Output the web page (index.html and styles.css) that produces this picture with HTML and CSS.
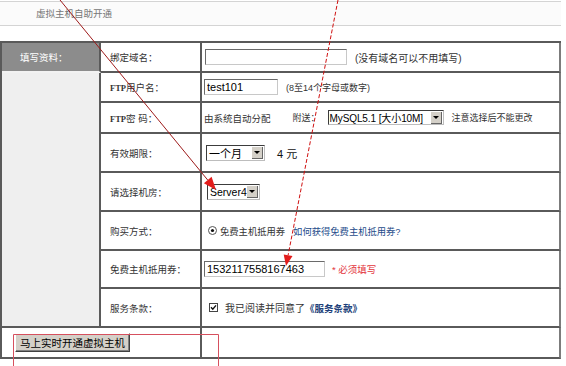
FILE: index.html
```html
<!DOCTYPE html>
<html>

<head>
  <meta charset="utf-8" />
  <meta name="viewport" content="width=device-width, initial-scale=1" />
  <title>虚拟主机自助开通</title>
  <link rel="stylesheet" href="styles.css">
</head>

<body>
  <div class="page">
    <div class="crumb">虚拟主机自助开通</div>

    <table class="form">
      <tr class="r1">
        <td class="side-head">填写资料：</td>
        <td class="label">绑定域名：</td>
        <td class="value">
          <div class="field">
            <input class="txt w-domain" type="text" value="" />
            <span class="hint">(没有域名可以不用填写)</span>
          </div>
        </td>
      </tr>
      <tr class="r2">
        <td class="side" rowspan="7"></td>
        <td class="label"><span class="ftp">FTP</span>用户名：</td>
        <td class="value">
          <div class="field">
            <input class="txt w-user" type="text" value="test101" />
            <span class="hint small">(8至14个字母或数字)</span>
          </div>
        </td>
      </tr>
      <tr class="r3">
        <td class="label"><span class="ftp">FTP</span>密 码：</td>
        <td class="value">
          <div class="field">
            <span class="auto">由系统自动分配</span>
            <span class="gift">附送：</span>
            <span class="sel w-mysql"><span class="sel-val">MySQL5.1 [大小10M]</span><span class="sel-btn"></span></span>
            <span class="hint small">注意选择后不能更改</span>
          </div>
        </td>
      </tr>
      <tr class="r4">
        <td class="label">有效期限：</td>
        <td class="value">
          <div class="field">
            <span class="sel w-month"><span class="sel-val">一个月</span><span class="sel-btn"></span></span>
            <span class="price">4 元</span>
          </div>
        </td>
      </tr>
      <tr class="r5">
        <td class="label">请选择机房：</td>
        <td class="value">
          <div class="field">
            <span class="sel w-room"><span class="sel-val">Server4</span><span class="sel-btn"></span></span>
          </div>
        </td>
      </tr>
      <tr class="r6">
        <td class="label">购买方式：</td>
        <td class="value">
          <div class="field">
            <svg class="radio" width="9" height="9" viewBox="0 0 9 9">
              <circle cx="4.5" cy="4.5" r="4" fill="#fff" stroke="#555" />
              <circle cx="4.5" cy="4.5" r="1.6" fill="#111" />
            </svg>
            <span class="pay">免费主机抵用券</span>
            <a class="link" href="#">如何获得免费主机抵用券?</a>
          </div>
        </td>
      </tr>
      <tr class="r7">
        <td class="label">免费主机抵用券：</td>
        <td class="value">
          <div class="field">
            <input class="txt w-coupon" type="text" value="1532117558167463" />
            <span class="required">* 必须填写</span>
          </div>
        </td>
      </tr>
      <tr class="r8">
        <td class="label">服务条款：</td>
        <td class="value">
          <div class="field">
            <svg class="check" width="9" height="9" viewBox="0 0 9 9">
              <rect x="0.5" y="0.5" width="8" height="8" fill="#fff" stroke="#444" />
              <path d="M2 4.2 L3.8 6.2 L7 2.4" fill="none" stroke="#111" stroke-width="1.4" />
            </svg>
            <span class="agree">我已阅读并同意了</span>
            <a class="terms" href="#">《服务条款》</a>
          </div>
        </td>
      </tr>
      <tr class="r9">
        <td class="submit" colspan="2"><button class="btn">马上实时开通虚拟主机</button></td>
        <td class="value"></td>
      </tr>
    </table>

    <!-- annotation marks drawn over the form -->
    <svg class="marks" width="566" height="366" viewBox="0 0 566 366">
      <line x1="60" y1="0" x2="207.7" y2="180" stroke="#9e1b1b" stroke-width="1" />
      <polygon points="216,190 203.9,183.2 211.6,176.8" fill="#e21c1c" />
      <line x1="338" y1="0" x2="288.1" y2="255.2" stroke="#cf1010" stroke-width="1" stroke-dasharray="4 2" />
      <polygon points="286,266 283.7,254.4 292.5,256" fill="#e21c1c" />
      <path d="M13.5 366 V334.5 H218.5 V366" fill="none" stroke="#d6505e" stroke-width="1" />
    </svg>
  </div>
</body>

</html>
```

FILE: styles.css
```css
body {
  margin: 0;
  font-family: "Liberation Sans", "Noto Sans CJK SC", sans-serif;
  font-size: 9.5px;
  color: #333;
  background: #fff;
}

.page {
  position: relative;
  width: 566px;
  height: 366px;
  overflow: hidden;
}

.crumb {
  box-sizing: border-box;
  width: 561px;
  height: 25px;
  margin-top: 1px;
  padding-left: 36px;
  line-height: 23px;
  border-top: 1px solid #d4d4d4;
  border-bottom: 1px solid #d4d4d4;
  background: #fbfbfb;
  color: #777;
}

.form {
  margin-top: 15px;
  width: 561px;
  table-layout: fixed;
  border-spacing: 0;
  border-top: 2px solid #5a5a5a;
  border-left: 2px solid #5a5a5a;
}

.form td {
  box-sizing: border-box;
  padding: 0;
  border-right: 2px solid #5a5a5a;
  border-bottom: 2px solid #5a5a5a;
  vertical-align: middle;
}

.form td.value {
  padding-left: 2px;
  border-right-color: #7c7c7c;
}

.form td.side-head {
  width: 99px;
  padding-left: 18px;
  background: #8c8c8c;
  color: #fff;
  border-bottom-color: #f2f2f2;
}

.form td.side {
  background: #efefef;
}

.form td.label {
  width: 101px;
  padding-left: 9px;
  color: #333;
}

.r1 td { height: 30px; }
.r2 td { height: 30px; }
.r3 td { height: 31px; }
.r4 td { height: 39px; }
.r5 td { height: 39px; }
.r6 td { height: 39px; }
.r7 td { height: 38px; }
.r8 td { height: 39px; }
.r9 td { height: 31px; }

.ftp {
  font-family: "Liberation Serif", serif;
  font-weight: bold;
  font-size: 8.5px;
}

.field {
  display: flex;
  align-items: center;
}

.txt {
  box-sizing: border-box;
  height: 16px;
  margin: 0;
  padding: 0 2px;
  border: 1px solid;
  border-color: #6a6a6a #c8c8c8 #c8c8c8 #6a6a6a;
  font: 11px "Liberation Sans", sans-serif;
  color: #000;
  background: #fff;
}

.w-domain {
  width: 142px;
  margin-left: 1px;
}

.w-user {
  width: 74px;
  margin-left: 0;
}

.w-coupon {
  width: 121px;
}

.hint {
  margin-left: 8px;
  font-size: 10px;
  color: #333;
}

.hint.small {
  font-size: 9px;
}

.auto {
  font-size: 9.5px;
}

.gift {
  margin-left: 22px;
  font-size: 9px;
}

.sel {
  box-sizing: border-box;
  display: inline-flex;
  align-items: center;
  height: 16px;
  border: 1px solid;
  border-color: #3c3c3c #bdbdbd #bdbdbd #3c3c3c;
  background: #fff;
}

.sel-val {
  flex: 1;
  padding-left: 2px;
  font-size: 11px;
  color: #000;
  white-space: nowrap;
  overflow: hidden;
}

.sel-btn {
  position: relative;
  flex: none;
  width: 11px;
  height: 12px;
  margin-right: 1px;
  background: #d4d0c8;
  border-right: 1px solid #666;
  border-bottom: 1px solid #666;
  box-sizing: border-box;
}

.sel-btn::after {
  content: "";
  position: absolute;
  left: 2px;
  top: 4px;
  border-left: 3px solid transparent;
  border-right: 3px solid transparent;
  border-top: 3px solid #000;
}

.w-mysql {
  width: 116px;
  height: 15px;
  margin-left: 8px;
}

.w-mysql .sel-val {
  padding-left: 1px;
  font-size: 10px;
  letter-spacing: -0.1px;
}

.w-month {
  width: 59px;
  margin-left: 2px;
}

.w-room {
  width: 53px;
  margin-left: 3px;
}

.w-room .sel-val {
  font-size: 10.5px;
}

.price {
  margin-left: 12px;
  font-size: 11px;
  color: #111;
}

.radio {
  margin-left: 4px;
}

.pay {
  margin-left: 3px;
  font-size: 9.3px;
}

.link {
  margin-left: 8px;
  font-size: 9.3px;
  color: #1e4c8a;
  text-decoration: none;
}

.required {
  margin-left: 7px;
  font-size: 9.5px;
  color: #e3343c;
}

.check {
  margin-left: 5px;
}

.agree {
  margin-left: 7px;
  font-size: 10px;
}

.terms {
  font-size: 9.5px;
  font-weight: bold;
  color: #1d3f7a;
  text-decoration: none;
}

.form td.submit {
  padding-left: 13px;
}

.btn {
  height: 19px;
  margin: 0;
  padding: 0 4px;
  line-height: 16px;
  font: 10.5px "Noto Sans CJK SC", sans-serif;
  color: #000;
  background: #d4d0c8;
  border: 1px solid;
  border-color: #fff #404040 #404040 #fff;
  box-shadow: inset -1px -1px #808080;
}

.marks {
  position: absolute;
  left: 0;
  top: 0;
  pointer-events: none;
}
```
